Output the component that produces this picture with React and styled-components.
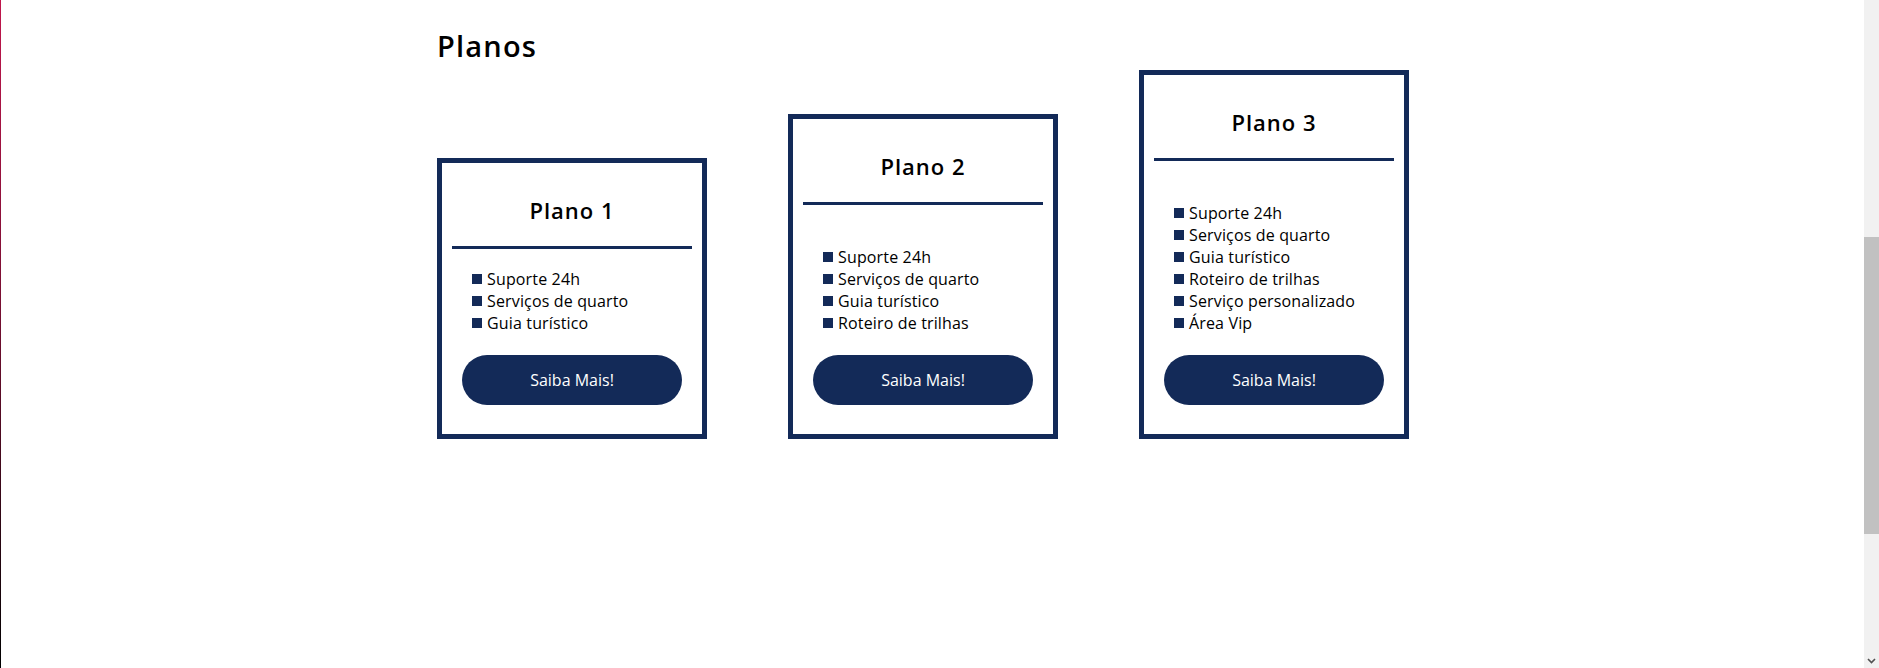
import React from 'react';
import styled, { createGlobalStyle } from 'styled-components';

const navy = '#132a58';

const GlobalStyle = createGlobalStyle`
  html, body {
    margin: 0;
    padding: 0;
  }
  body {
    font-family: 'Open Sans', 'Noto Sans', sans-serif;
    color: #000;
    background: #fff;
  }
`;

const Page = styled.div`
  display: flex;
  height: 100vh;
  overflow: hidden;
  background:
    linear-gradient(to bottom, #c0164c 0%, #7a0f33 45%, #2a0612 80%, #000 100%) left top / 1px 100% no-repeat,
    #fff;
`;

const Main = styled.main`
  flex: 1;
  padding-top: 28px;
`;

const ScrollTrack = styled.div`
  width: 15px;
  flex: none;
  display: flex;
  flex-direction: column;
  background: #f1f1f1;
`;

const ScrollThumb = styled.div`
  margin-top: 237px;
  height: 297px;
  background: #c1c1c1;
`;

const ScrollArrow = styled.div`
  margin-top: auto;
  height: 15px;
  display: flex;
  align-items: center;
  justify-content: center;
`;

const Container = styled.div`
  max-width: 990px;
  margin: 0 auto;
`;

const Heading = styled.h2`
  margin: 0 0 6px;
  font-size: 29px;
  line-height: 36px;
  font-weight: 600;
  letter-spacing: 1.2px;
`;

const CardsRow = styled.div`
  display: flex;
  align-items: flex-end;
  gap: 81px;
`;

const Card = styled.div`
  box-sizing: border-box;
  width: 270px;
  height: ${(p) => p.$height}px;
  border: 5px solid ${navy};
  display: flex;
  flex-direction: column;
  padding: 32px 0 29px;
`;

const CardTitle = styled.h3`
  margin: 0;
  text-align: center;
  font-size: 22px;
  line-height: 30px;
  font-weight: 600;
  letter-spacing: 1px;
`;

const Divider = styled.hr`
  margin: 21px 10px 0;
  height: 3px;
  border: none;
  background: ${navy};
`;

const FeatureList = styled.ul`
  list-style: none;
  margin: auto 0 0;
  padding: 0 0 0 30px;
`;

const Feature = styled.li`
  display: flex;
  align-items: flex-start;
  font-size: 16px;
  line-height: 22px;
  letter-spacing: 0.15px;

  &::before {
    content: '';
    flex: none;
    width: 10px;
    height: 10px;
    margin: 6px 5px 0 0;
    background: ${navy};
  }
`;

const MoreButton = styled.button`
  align-self: center;
  margin-top: 21px;
  width: 220px;
  height: 50px;
  border: none;
  border-radius: 25px;
  background: ${navy};
  color: #fff;
  font-family: inherit;
  font-size: 16px;
  cursor: pointer;
`;

const plans = [
  {
    name: 'Plano 1',
    height: 281,
    features: ['Suporte 24h', 'Serviços de quarto', 'Guia turístico'],
  },
  {
    name: 'Plano 2',
    height: 325,
    features: ['Suporte 24h', 'Serviços de quarto', 'Guia turístico', 'Roteiro de trilhas'],
  },
  {
    name: 'Plano 3',
    height: 369,
    features: [
      'Suporte 24h',
      'Serviços de quarto',
      'Guia turístico',
      'Roteiro de trilhas',
      'Serviço personalizado',
      'Área Vip',
    ],
  },
];

function App() {
  return (
    <>
      <GlobalStyle />
      <Page>
        <Main>
          <Container>
            <Heading>Planos</Heading>
            <CardsRow>
              {plans.map((plan) => (
                <Card key={plan.name} $height={plan.height}>
                  <CardTitle>{plan.name}</CardTitle>
                  <Divider />
                  <FeatureList>
                    {plan.features.map((f) => (
                      <Feature key={f}>{f}</Feature>
                    ))}
                  </FeatureList>
                  <MoreButton>Saiba Mais!</MoreButton>
                </Card>
              ))}
            </CardsRow>
          </Container>
        </Main>
        <ScrollTrack>
          <ScrollThumb />
          <ScrollArrow>
            <svg width="9" height="6" viewBox="0 0 9 6">
              <path d="M1 1 L4.5 4.5 L8 1" fill="none" stroke="#505050" strokeWidth="1.6" />
            </svg>
          </ScrollArrow>
        </ScrollTrack>
      </Page>
    </>
  );
}

export default App;
